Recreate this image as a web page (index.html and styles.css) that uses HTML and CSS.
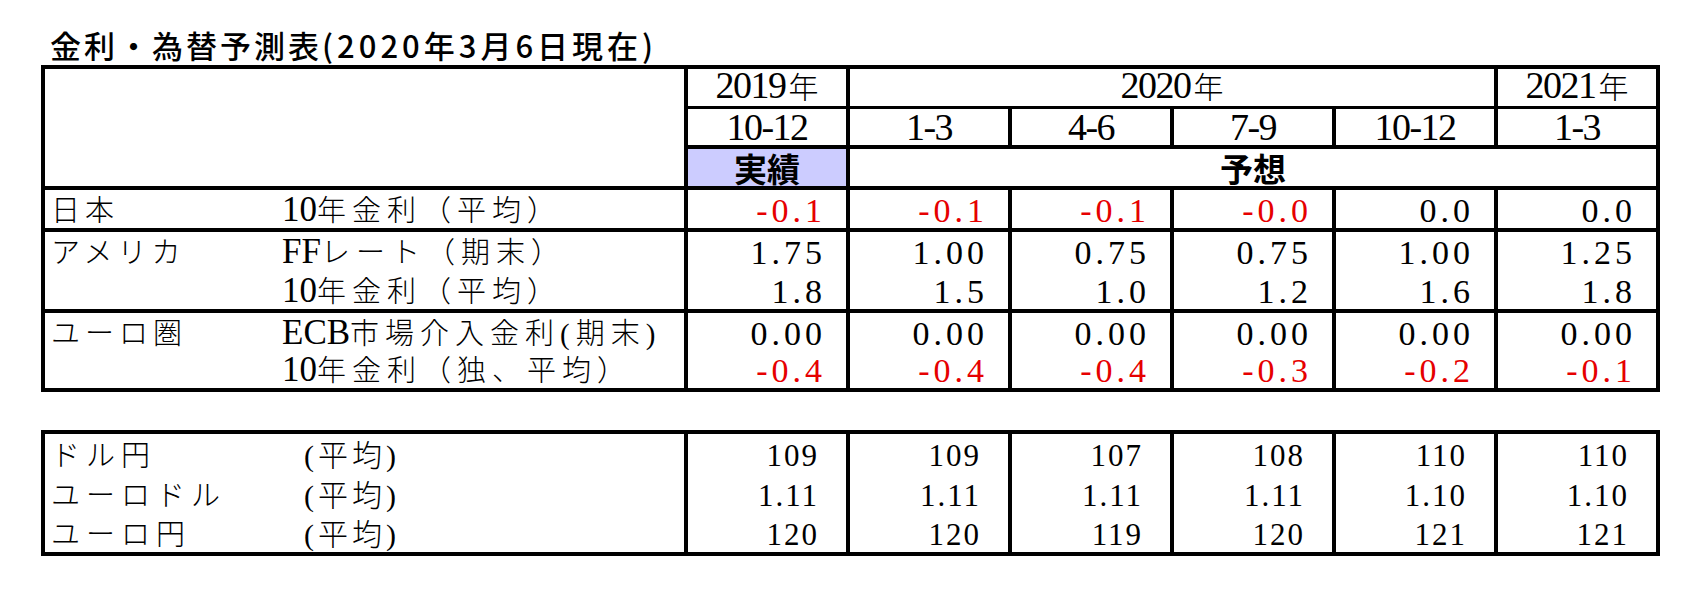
FILE: index.html
```html
<!DOCTYPE html>
<html lang="ja">
<head>
<meta charset="utf-8">
<title>金利・為替予測表</title>
<link rel="stylesheet" href="styles.css">
</head>
<body>
<h1 class="title"><span class="t-a">金利・為替予測表</span><span class="t-b">(2020年3月6日現在)</span></h1>

<table class="tbl rates">
  <colgroup>
    <col class="w-lab1"><col class="w-sub1">
    <col class="w-num"><col class="w-num"><col class="w-num"><col class="w-num"><col class="w-num"><col class="w-num">
  </colgroup>
  <tr class="hr1">
    <td class="corner" colspan="2" rowspan="3"></td>
    <td class="hc">2019<span class="nen">年</span></td>
    <td class="hc" colspan="4">2020<span class="nen">年</span></td>
    <td class="hc">2021<span class="nen">年</span></td>
  </tr>
  <tr class="hr2">
    <td class="hc">10-12</td>
    <td class="hc">1-3</td>
    <td class="hc">4-6</td>
    <td class="hc">7-9</td>
    <td class="hc">10-12</td>
    <td class="hc">1-3</td>
  </tr>
  <tr class="hr3">
    <td class="actual">実績</td>
    <td class="fcst" colspan="5">予想</td>
  </tr>
  <tr class="end r-jp">
    <td class="lab">日本</td>
    <td class="sub"><span class="lat">10</span>年金利（平均）</td>
    <td class="num neg">-0.1</td><td class="num neg">-0.1</td><td class="num neg">-0.1</td><td class="num neg">-0.0</td><td class="num">0.0</td><td class="num">0.0</td>
  </tr>
  <tr class="r-us1">
    <td class="lab">アメリカ</td>
    <td class="sub"><span class="lat">FF</span>レート（期末）</td>
    <td class="num">1.75</td><td class="num">1.00</td><td class="num">0.75</td><td class="num">0.75</td><td class="num">1.00</td><td class="num">1.25</td>
  </tr>
  <tr class="end r-us2">
    <td class="lab"></td>
    <td class="sub"><span class="lat">10</span>年金利（平均）</td>
    <td class="num">1.8</td><td class="num">1.5</td><td class="num">1.0</td><td class="num">1.2</td><td class="num">1.6</td><td class="num">1.8</td>
  </tr>
  <tr class="r-eu1">
    <td class="lab">ユーロ圏</td>
    <td class="sub"><span class="lat">ECB</span>市場介入金利(期末)</td>
    <td class="num">0.00</td><td class="num">0.00</td><td class="num">0.00</td><td class="num">0.00</td><td class="num">0.00</td><td class="num">0.00</td>
  </tr>
  <tr class="end r-eu2">
    <td class="lab"></td>
    <td class="sub"><span class="lat">10</span>年金利（独、平均）</td>
    <td class="num neg">-0.4</td><td class="num neg">-0.4</td><td class="num neg">-0.4</td><td class="num neg">-0.3</td><td class="num neg">-0.2</td><td class="num neg">-0.1</td>
  </tr>
</table>

<table class="tbl fx">
  <colgroup>
    <col class="w-lab2"><col class="w-sub2">
    <col class="w-num"><col class="w-num"><col class="w-num"><col class="w-num"><col class="w-num"><col class="w-num">
  </colgroup>
  <tr class="f1">
    <td class="lab">ドル円</td>
    <td class="sub">(平均)</td>
    <td class="num">109</td><td class="num">109</td><td class="num">107</td><td class="num">108</td><td class="num">110</td><td class="num">110</td>
  </tr>
  <tr class="f2">
    <td class="lab">ユーロドル</td>
    <td class="sub">(平均)</td>
    <td class="num">1.11</td><td class="num">1.11</td><td class="num">1.11</td><td class="num">1.11</td><td class="num">1.10</td><td class="num">1.10</td>
  </tr>
  <tr class="end f3">
    <td class="lab">ユーロ円</td>
    <td class="sub">(平均)</td>
    <td class="num">120</td><td class="num">120</td><td class="num">119</td><td class="num">120</td><td class="num">121</td><td class="num">121</td>
  </tr>
</table>
</body>
</html>
```

FILE: styles.css
```css
* { box-sizing: border-box; }

html, body {
  margin: 0;
  padding: 0;
  background: #ffffff;
}

body {
  width: 1706px;
  height: 592px;
  overflow: hidden;
  color: #000000;
  font-family: "Liberation Serif", "Noto Sans CJK JP", serif;
}

/* ---------- title ---------- */
.title {
  margin: 0;
  height: 65px;
  padding: 27px 0 0 50px;
  font-family: "Noto Sans CJK JP", sans-serif;
  font-weight: 500;
  font-size: 31px;
  line-height: 36px;
  white-space: nowrap;
}
.t-a { letter-spacing: 3px; }
.t-b { letter-spacing: 4px; }

/* ---------- tables ---------- */
.tbl {
  border-collapse: separate;
  border-spacing: 0;
  table-layout: fixed;
  width: 1619px;
  margin-left: 41px;
  border-left: 4px solid #000;
  border-top: 4px solid #000;
}
.tbl.fx { margin-top: 38px; }

.w-lab1 { width: 237px; }
.w-sub1 { width: 406px; }
.w-lab2 { width: 259px; }
.w-sub2 { width: 384px; }
.w-num  { width: 162px; }

.tbl td {
  padding: 0;
  vertical-align: bottom;
  line-height: 30px;
  white-space: nowrap;
}

/* row heights (including bottom rules) */
.tbl .hr1 { height: 39px; }
.tbl .hr2 { height: 40px; }
.tbl .hr3 { height: 41px; }
.tbl .r-jp { height: 42px; }
.tbl .r-us1 { height: 38px; }
.tbl .r-us2 { height: 43px; }
.tbl .r-eu1 { height: 38px; }
.tbl .r-eu2 { height: 41px; }
.tbl .f1 { height: 39px; }
.tbl .f2 { height: 40px; }
.tbl .f3 { height: 43px; }

/* header */
.tbl .corner {
  border-right: 4px solid #000;
  border-bottom: 4px solid #000;
}
.tbl .hc {
  text-align: center;
  font-size: 38px;
  letter-spacing: -1.5px;
  line-height: 32px;
  border-right: 4px solid #000;
  border-bottom: 4px solid #000;
  padding-bottom: 2px;
}
.tbl .hr1 .hc { border-bottom-width: 3px; }
.nen {
  font-size: 30px;
  font-weight: 300;
  letter-spacing: 0;
  margin-left: 3px;
}
.tbl .actual,
.tbl .fcst {
  text-align: center;
  vertical-align: middle;
  font-family: "Noto Sans CJK JP", sans-serif;
  font-weight: 700;
  font-size: 33px;
  line-height: 34px;
  border-right: 4px solid #000;
  border-bottom: 4px solid #000;
}
.tbl .actual { background: #ccccff; }

/* body rows */
.tbl .end td { border-bottom: 4px solid #000; }

.tbl .lab,
.tbl .sub {
  font-size: 29px;
  font-weight: 300;
  letter-spacing: 5px;
  padding-bottom: 2px;
}
.tbl .sub { letter-spacing: 6px; }
.tbl .lab { padding-left: 6px; }
.tbl .sub { border-right: 4px solid #000; }
.fx .lab { letter-spacing: 6px; }
.fx .sub { font-size: 30px; letter-spacing: 4px; }

.lat {
  font-size: 35px;
  letter-spacing: 0;
  font-weight: 400;
}

.tbl .num {
  text-align: right;
  font-size: 34px;
  letter-spacing: 4px;
  padding-right: 20px;
  padding-bottom: 2px;
  border-right: 4px solid #000;
}
.tbl .neg { color: #e60000; }

.fx .num {
  font-size: 31px;
  letter-spacing: 2px;
  padding-right: 27px;
}
```
